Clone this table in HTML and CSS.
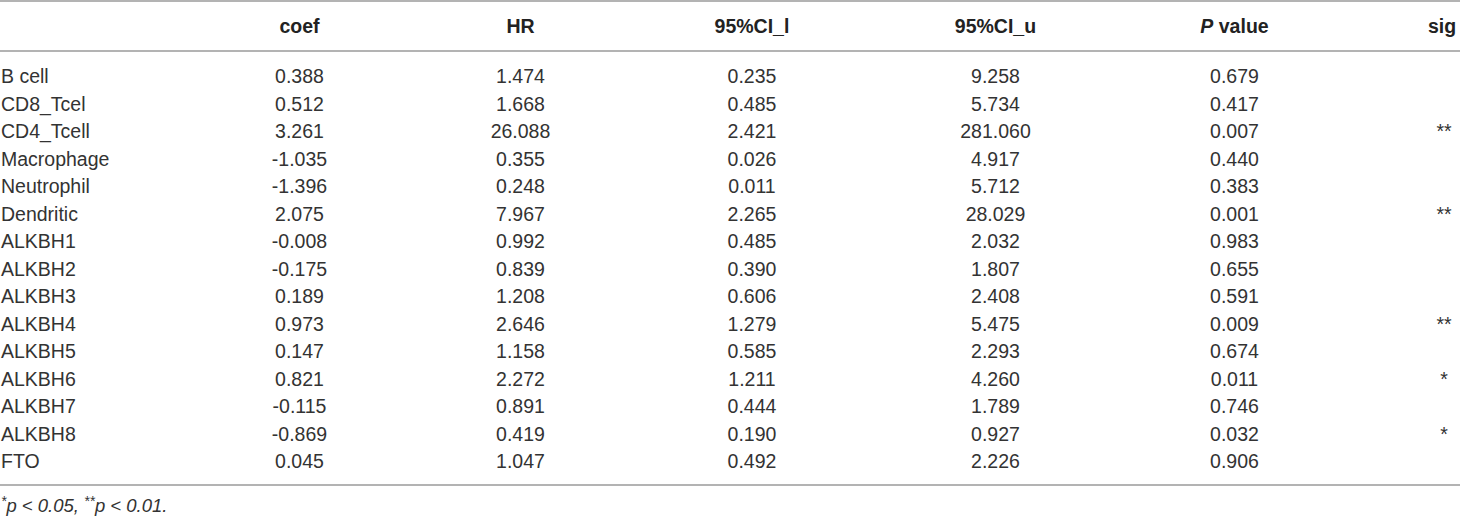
FILE: index.html
```html
<!DOCTYPE html>
<html lang="en">
<head>
    <meta charset="UTF-8">
    <meta name="viewport" content="width=device-width, initial-scale=1.0">
    <title>Cox regression</title>
    <link rel="stylesheet" href="styles.css">
</head>
<body>
    <table class="stats">
        <colgroup>
            <col class="c-name">
            <col class="c-coef">
            <col class="c-hr">
            <col class="c-cil">
            <col class="c-ciu">
            <col class="c-p">
            <col class="c-sig">
        </colgroup>
        <thead>
            <tr>
                <th></th>
                <th>coef</th>
                <th>HR</th>
                <th>95%CI_l</th>
                <th>95%CI_u</th>
                <th><i>P</i> value</th>
                <th class="sig">sig</th>
            </tr>
        </thead>
        <tbody>
            <tr><td>B cell</td><td>0.388</td><td>1.474</td><td>0.235</td><td>9.258</td><td>0.679</td><td class="sig"></td></tr>
            <tr><td>CD8_Tcel</td><td>0.512</td><td>1.668</td><td>0.485</td><td>5.734</td><td>0.417</td><td class="sig"></td></tr>
            <tr><td>CD4_Tcell</td><td>3.261</td><td>26.088</td><td>2.421</td><td>281.060</td><td>0.007</td><td class="sig">**</td></tr>
            <tr><td>Macrophage</td><td>-1.035</td><td>0.355</td><td>0.026</td><td>4.917</td><td>0.440</td><td class="sig"></td></tr>
            <tr><td>Neutrophil</td><td>-1.396</td><td>0.248</td><td>0.011</td><td>5.712</td><td>0.383</td><td class="sig"></td></tr>
            <tr><td>Dendritic</td><td>2.075</td><td>7.967</td><td>2.265</td><td>28.029</td><td>0.001</td><td class="sig">**</td></tr>
            <tr><td>ALKBH1</td><td>-0.008</td><td>0.992</td><td>0.485</td><td>2.032</td><td>0.983</td><td class="sig"></td></tr>
            <tr><td>ALKBH2</td><td>-0.175</td><td>0.839</td><td>0.390</td><td>1.807</td><td>0.655</td><td class="sig"></td></tr>
            <tr><td>ALKBH3</td><td>0.189</td><td>1.208</td><td>0.606</td><td>2.408</td><td>0.591</td><td class="sig"></td></tr>
            <tr><td>ALKBH4</td><td>0.973</td><td>2.646</td><td>1.279</td><td>5.475</td><td>0.009</td><td class="sig">**</td></tr>
            <tr><td>ALKBH5</td><td>0.147</td><td>1.158</td><td>0.585</td><td>2.293</td><td>0.674</td><td class="sig"></td></tr>
            <tr><td>ALKBH6</td><td>0.821</td><td>2.272</td><td>1.211</td><td>4.260</td><td>0.011</td><td class="sig">*</td></tr>
            <tr><td>ALKBH7</td><td>-0.115</td><td>0.891</td><td>0.444</td><td>1.789</td><td>0.746</td><td class="sig"></td></tr>
            <tr><td>ALKBH8</td><td>-0.869</td><td>0.419</td><td>0.190</td><td>0.927</td><td>0.032</td><td class="sig">*</td></tr>
            <tr><td>FTO</td><td>0.045</td><td>1.047</td><td>0.492</td><td>2.226</td><td>0.906</td><td class="sig"></td></tr>
        </tbody>
    </table>
    <p class="note"><sup>*</sup>p &lt; 0.05, <sup>**</sup>p &lt; 0.01.</p>
</body>
</html>
```

FILE: styles.css
```css
* {
    margin: 0;
    padding: 0;
    box-sizing: border-box;
}

body {
    font-family: "Liberation Sans", Arial, sans-serif;
    background-color: #fff;
    color: #333;
    width: 1460px;
}

.stats {
    width: 1460px;
    table-layout: fixed;
    border-collapse: collapse;
    font-size: 19.5px;
    line-height: 27.5px;
    border-top: 2px solid #b3b3b3;
    border-bottom: 2px solid #b3b3b3;
}

.c-name { width: 190px; }
.c-coef { width: 219px; }
.c-hr { width: 223px; }
.c-cil { width: 240px; }
.c-ciu { width: 247px; }
.c-p { width: 231px; }
.c-sig { width: 110px; }

.stats th,
.stats td {
    text-align: center;
    font-weight: normal;
    white-space: nowrap;
}

.stats th {
    font-weight: bold;
    color: #222;
    padding-top: 11px;
    padding-bottom: 9.5px;
    border-bottom: 2px solid #b3b3b3;
}

.stats th i {
    font-style: italic;
}

.stats td:first-child {
    text-align: left;
    padding-left: 1px;
}

.stats .sig {
    padding-left: 78px;
}

.stats th.sig {
    padding-left: 74px;
}

.stats tbody tr:first-child td {
    padding-top: 11px;
}

.stats tbody tr:last-child td {
    padding-bottom: 8px;
}

.note {
    font-style: italic;
    font-size: 18.5px;
    line-height: 27.5px;
    padding-top: 6px;
    padding-left: 1px;
}

.note sup {
    font-size: 0.75em;
    line-height: 0;
    vertical-align: 0.4em;
}
```
